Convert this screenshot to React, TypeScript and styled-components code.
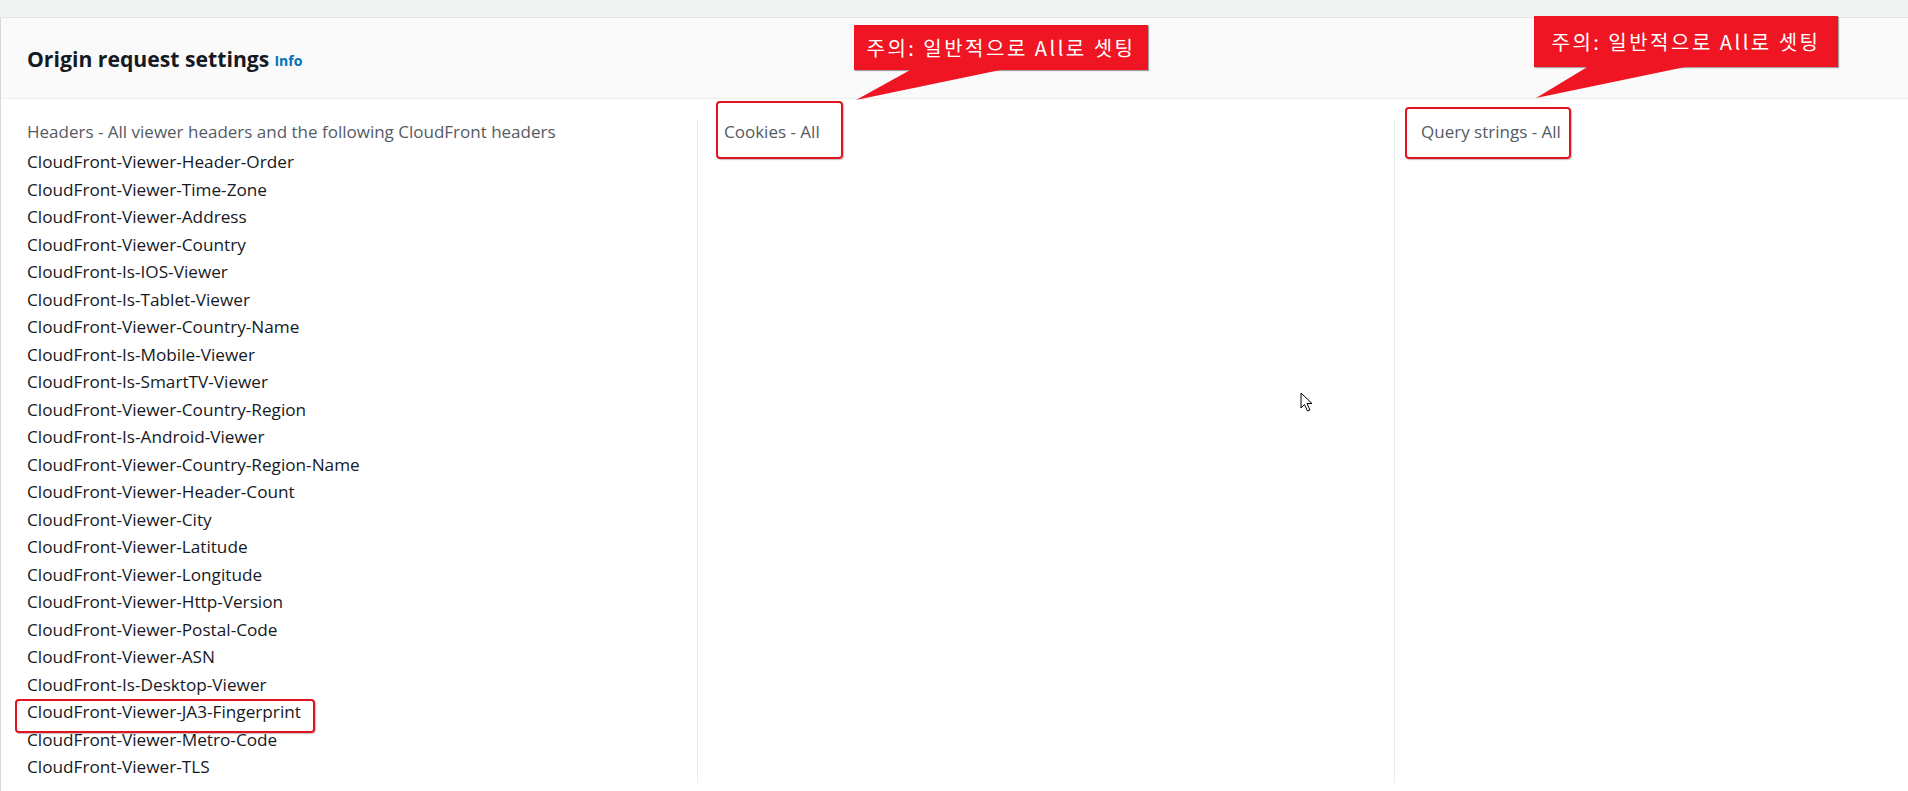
import { createGlobalStyle } from 'styled-components';
import styled from 'styled-components';

const GlobalStyle = createGlobalStyle`
    html, body {
        margin: 0;
        padding: 0;
        background: #ffffff;
        overflow: hidden;
    }
    body {
        font-family: "Open Sans", "Noto Sans", Arial, sans-serif;
        color: #16191f;
    }
`;

const Page = styled.div`
    position: relative;
    width: 1908px;
    height: 791px;
    overflow: hidden;
`;

const TopStrip = styled.div`
    height: 17px;
    background: #f2f3f3;
    border-bottom: 1px solid #e3e5e5;
`;

const Panel = styled.section`
    border-left: 1px solid #d5dbdb;
    height: 773px;
`;

const PanelHeader = styled.header`
    height: 81px;
    box-sizing: border-box;
    background: #fafafa;
    border-bottom: 1px solid #eaeded;
    padding: 0 0 0 26px;
    display: flex;
    align-items: center;
    gap: 5px;
`;

const Title = styled.h2`
    margin: 0;
    font-size: 21.2px;
    font-weight: 700;
    color: #16191f;
`;

const InfoLink = styled.a`
    font-size: 14px;
    font-weight: 700;
    color: #0073bb;
    margin-top: 4px;
    text-decoration: none;
`;

const Columns = styled.div`
    display: grid;
    grid-template-columns: 696px 697px 1fr;
    margin-top: 20px;
    height: 664px;
`;

const Column = styled.div<{ $divider?: boolean }>`
    padding: 0 26px;
    border-left: ${(p) => (p.$divider ? '1px solid #eaeded' : 'none')};
`;

const Label = styled.div`
    font-size: 17px;
    line-height: 26px;
    color: #545b64;
    margin-bottom: 3px;
`;

const List = styled.ul`
    list-style: none;
    margin: 0;
    padding: 0;
`;

const Item = styled.li`
    font-size: 17.2px;
    line-height: 27.5px;
    color: #16191f;
`;

// red hand-drawn marker boxes laid over the screenshot content
const Highlight = styled.div<{ $x: number; $y: number; $w: number; $h: number }>`
    position: absolute;
    left: ${(p) => p.$x}px;
    top: ${(p) => p.$y}px;
    width: ${(p) => p.$w}px;
    height: ${(p) => p.$h}px;
    box-sizing: border-box;
    border: 2px solid #e3131f;
    border-radius: 4px;
    box-shadow: 1px 1px 1px rgba(0, 0, 0, 0.25);
`;

const Callout = styled.div<{ $x: number; $y: number }>`
    position: absolute;
    left: ${(p) => p.$x}px;
    top: ${(p) => p.$y}px;
`;

const CalloutBox = styled.div<{ $w: number; $h: number }>`
    position: relative;
    width: ${(p) => p.$w}px;
    height: ${(p) => p.$h}px;
    background: #ef1523;
    box-shadow: 1px 1px 1px rgba(0, 0, 0, 0.35);
    color: #ffffff;
    display: flex;
    align-items: center;
    justify-content: center;
    font-family: "Noto Sans CJK KR", "Noto Sans", sans-serif;
    font-size: 20px;
    letter-spacing: 2.5px;
    z-index: 1;
`;

const Tail = styled.svg`
    position: absolute;
    left: 0;
    top: 0;
    overflow: visible;
    z-index: 2;
`;

const Cursor = styled.svg`
    position: absolute;
    left: 1300px;
    top: 392px;
`;

const headers = [
    'CloudFront-Viewer-Header-Order',
    'CloudFront-Viewer-Time-Zone',
    'CloudFront-Viewer-Address',
    'CloudFront-Viewer-Country',
    'CloudFront-Is-IOS-Viewer',
    'CloudFront-Is-Tablet-Viewer',
    'CloudFront-Viewer-Country-Name',
    'CloudFront-Is-Mobile-Viewer',
    'CloudFront-Is-SmartTV-Viewer',
    'CloudFront-Viewer-Country-Region',
    'CloudFront-Is-Android-Viewer',
    'CloudFront-Viewer-Country-Region-Name',
    'CloudFront-Viewer-Header-Count',
    'CloudFront-Viewer-City',
    'CloudFront-Viewer-Latitude',
    'CloudFront-Viewer-Longitude',
    'CloudFront-Viewer-Http-Version',
    'CloudFront-Viewer-Postal-Code',
    'CloudFront-Viewer-ASN',
    'CloudFront-Is-Desktop-Viewer',
    'CloudFront-Viewer-JA3-Fingerprint',
    'CloudFront-Viewer-Metro-Code',
    'CloudFront-Viewer-TLS',
];

// tail points are relative to the callout's top-left corner
const Note = ({ x, y, w, h, tail }: { x: number; y: number; w: number; h: number; tail: string }) => (
    <Callout $x={x} $y={y}>
        <CalloutBox $w={w} $h={h}>주의: 일반적으로 All로 셋팅</CalloutBox>
        <Tail width={w} height={h}>
            <polygon points={tail} fill="#ef1523" />
        </Tail>
    </Callout>
);

export default function App() {
    return (
        <Page>
            <GlobalStyle />
            <TopStrip />
            <Panel>
                <PanelHeader>
                    <Title>Origin request settings</Title>
                    <InfoLink>Info</InfoLink>
                </PanelHeader>
                <Columns>
                    <Column>
                        <Label>Headers - All viewer headers and the following CloudFront headers</Label>
                        <List>
                            {headers.map((h) => (
                                <Item key={h}>{h}</Item>
                            ))}
                        </List>
                    </Column>
                    <Column $divider>
                        <Label>Cookies - All</Label>
                    </Column>
                    <Column $divider>
                        <Label>Query strings - All</Label>
                    </Column>
                </Columns>
            </Panel>

            <Highlight $x={716} $y={101} $w={127} $h={58} />
            <Highlight $x={1405} $y={107} $w={166} $h={52} />
            <Highlight $x={15} $y={699} $w={300} $h={34} />

            <Note x={854} y={25} w={294} h={45} tail="58,44 151,44 2,75" />
            <Note x={1534} y={16} w={304} h={51} tail="55,50 156,50 2,82" />

            <Cursor width="14" height="22" viewBox="0 0 14 22">
                <path
                    d="M1 1 L1 16 L4.5 12.5 L7.5 19 L10 18 L7 11.5 L12 11.5 Z"
                    fill="#ffffff"
                    stroke="#000000"
                    strokeWidth="1"
                    strokeLinejoin="miter"
                />
            </Cursor>
        </Page>
    );
}
